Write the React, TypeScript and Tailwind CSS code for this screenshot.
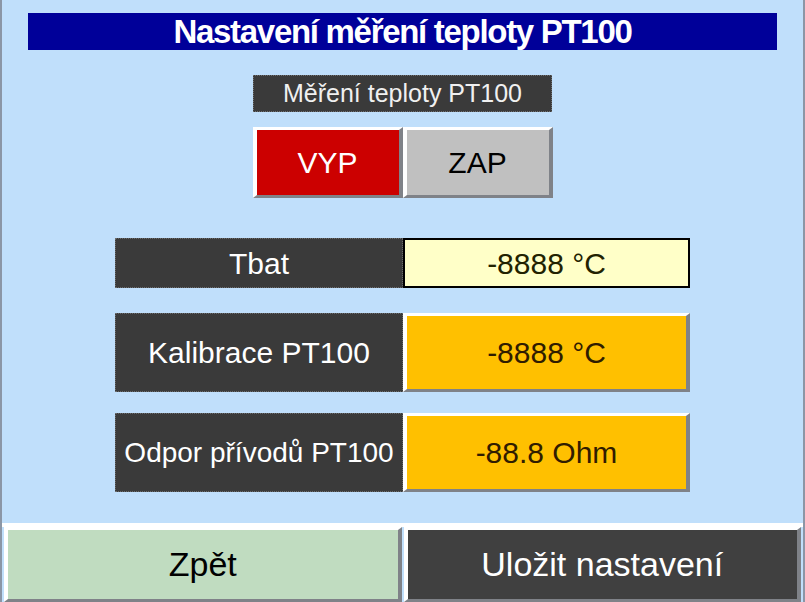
import React from 'react';

const font = { fontFamily: '"Liberation Sans", Arial, sans-serif' };

function Bevel({
  className,
  children,
}: {
  className: string;
  children: React.ReactNode;
}) {
  return (
    <div
      className={
        'flex items-center justify-center border-t-[3px] border-l-[4px] border-b-[3px] border-r-[4px] border-t-white border-l-white border-b-[#7f8288] border-r-[#7f8288] ' +
        className
      }
    >
      {children}
    </div>
  );
}

function Row({
  label,
  labelClass,
  value,
  tall,
}: {
  label: string;
  labelClass: string;
  value: string;
  tall?: boolean;
}) {
  return (
    <div className="flex justify-center">
      <div
        className={
          'w-[288px] flex items-center justify-center bg-[#3a3a3a] border border-dotted border-[#6b6b6b] text-white ' +
          labelClass +
          (tall ? ' h-[79px]' : ' h-[50px]')
        }
      >
        {label}
      </div>
      {tall ? (
        <Bevel className="w-[287px] h-[79px] bg-[#ffc000] text-[#301c00] text-[30px]">{value}</Bevel>
      ) : (
        <div className="w-[287px] h-[50px] flex items-center justify-center bg-[#ffffc8] border-[2px] border-black text-[#222200] text-[30px]">
          {value}
        </div>
      )}
    </div>
  );
}

export default function App() {
  return (
    <div
      style={font}
      className="w-[805px] h-[602px] bg-[#c0dffb] border-l-[2px] border-r-[2px] border-l-[#8b96a6] border-r-[#8b96a6] flex flex-col overflow-hidden"
    >
      <div className="mt-[13px] mx-[26px] h-[37px] bg-[#000099] flex items-center justify-center text-white font-bold text-[33px] tracking-[-1.3px]">
        Nastavení měření teploty PT100
      </div>

      <div className="mt-[25px] self-center w-[299px] h-[37px] bg-[#3a3a3a] border border-dotted border-[#707070] flex items-center justify-center text-[#f0f0f0] text-[25px]">
        Měření teploty PT100
      </div>

      <div className="mt-[15px] flex justify-center">
        <Bevel className="w-[150px] h-[71px] bg-[#cc0000] text-white text-[30px]">VYP</Bevel>
        <Bevel className="w-[150px] h-[71px] bg-[#c0c0c0] text-black text-[30px]">ZAP</Bevel>
      </div>

      <div className="mt-[40px] flex flex-col">
        <Row label="Tbat" labelClass="text-[30px]" value="-8888 °C" />
        <div className="mt-[25px]">
          <Row label="Kalibrace PT100" labelClass="text-[30px]" value="-8888 °C" tall />
        </div>
        <div className="mt-[21px]">
          <Row label="Odpor přívodů PT100" labelClass="text-[28px]" value="-88.8 Ohm" tall />
        </div>
      </div>

      <div className="mt-auto h-[79px] border-t-[4px] border-white flex gap-[2px] px-[2px]">
        <Bevel className="flex-1 h-full bg-[#c0dcc0] text-black text-[34px]">Zpět</Bevel>
        <Bevel className="flex-1 h-full bg-[#404040] text-white text-[34px]">Uložit nastavení</Bevel>
      </div>
    </div>
  );
}
